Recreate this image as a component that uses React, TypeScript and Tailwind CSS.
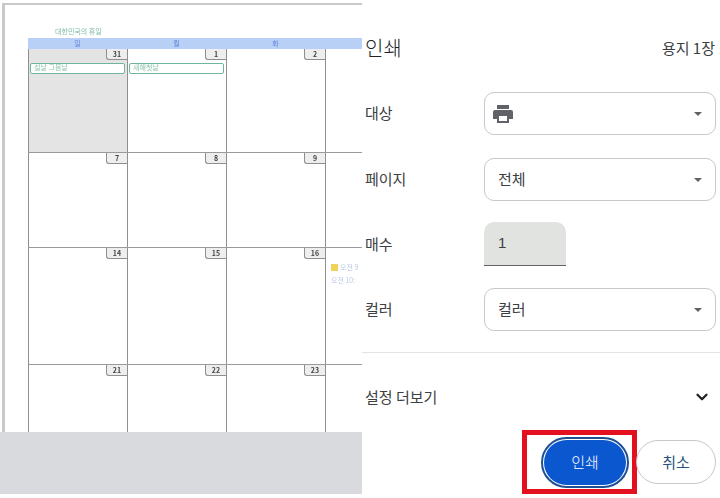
import { ChevronDown } from "lucide-react";

const font = "font-['Noto_Sans_CJK_KR','Noto_Sans',sans-serif]";

const rows = [
  { height: "h-[103px]", days: ["31", "1", "2"] },
  { height: "h-[95px]", days: ["7", "8", "9"] },
  { height: "h-[117px]", days: ["14", "15", "16"] },
  { height: "h-[68px]", days: ["21", "22", "23"] },
];

const events: Record<string, string> = {
  "31": "설날 그믐날",
  "1": "새해첫날",
};

const DayCell = ({ day }: { day: string }) => {
  return (
    <div className={`w-[99px] shrink-0 border-l border-[#8f8f8f] ${day === "31" ? "bg-[#e4e4e4]" : "bg-white"}`}>
      <div className="flex justify-end">
        <div className="h-[11px] w-[21px] rounded-bl-[3px] border-b border-l border-[#8f8f8f] bg-[#eeeeee] text-center text-[7px] leading-[10px] font-bold text-[#444444]">
          {day}
        </div>
      </div>
      {events[day] && (
        <div className="mt-[3px] ml-[1px] h-[11px] w-[95px] rounded-[2px] border-[1.5px] border-[#6fb59a] bg-white pl-[3px] text-[7px] leading-[6px] text-[#8cc4ac]">
          {events[day]}
        </div>
      )}
    </div>
  );
};

const Calendar = () => {
  return (
    <div className="w-[334px] overflow-hidden blur-[0.3px]">
      <div className="flex h-[11px] bg-[#b9d0f6] text-[7px] leading-[11px] text-[#5f86d8]">
        <div className="w-[99px] text-center">일</div>
        <div className="w-[99px] text-center">월</div>
        <div className="w-[99px] text-center">화</div>
      </div>
      {rows.map((row, i) => (
        <div key={i} className={`flex ${row.height} ${i > 0 ? "border-t border-[#9a9a9a]" : ""}`}>
          {row.days.map((d) => (
            <DayCell key={d} day={d} />
          ))}
          <div className="w-[37px] shrink-0 border-l border-[#8f8f8f] pt-[13px] pl-[5px]">
            {row.days[2] === "16" && (
              <div className="text-[7px] leading-[13px] whitespace-nowrap text-[#bcc6e6]">
                <div className="flex items-center gap-[2px]">
                  <span className="h-[7px] w-[7px] bg-[#f3d25a]" />
                  오전 9
                </div>
                <div>오전 10:</div>
              </div>
            )}
          </div>
        </div>
      ))}
    </div>
  );
};

const Select = ({ children }: { children: React.ReactNode }) => {
  return (
    <div className="flex h-[43px] w-[232px] items-center justify-between rounded-[10px] border border-[#c6c8cb] pr-[13px] pl-[13px] text-[15px] text-[#3c4043]">
      <div className="flex items-center">{children}</div>
      <span className="h-0 w-0 border-x-[4px] border-t-[4px] border-x-transparent border-t-[#5f6368]" />
    </div>
  );
};

const Row = ({ label, children, className }: { label: string; children: React.ReactNode; className?: string }) => {
  return (
    <div className={`flex items-center ${className ?? ""}`}>
      <div className="w-[122px] pl-[3px] text-[15px] text-[#3c4043]">{label}</div>
      {children}
    </div>
  );
};

export default function App() {
  return (
    <div className={`flex h-[498px] w-[720px] overflow-hidden bg-white ${font}`}>
      <div className="flex h-[494px] w-[362px] shrink-0 flex-col">
        <div className="h-[432px] pt-[3px] pl-[2px]">
          <div className="h-[429px] border-t-2 border-l-[3px] border-[#c9c9c9] pl-[23px]">
            <div className="h-[33px] pt-[20px] pl-[27px] text-[7px] leading-[12px] text-[#7fb9a6] blur-[0.3px]">대한민국의 휴일</div>
            <Calendar />
          </div>
        </div>
        <div className="flex-1 bg-[#d9dade]" />
      </div>

      <div className="flex w-[358px] flex-col">
        <div className="mt-[35px] flex h-[26px] items-center justify-between pr-[5px] pl-[3px]">
          <span className="text-[20px] font-light text-[#202124]">인쇄</span>
          <span className="text-[15px] text-[#3c4043]">용지 1장</span>
        </div>
        <Row label="대상" className="mt-[31px]">
          <Select>
            <svg width="22" height="20" viewBox="0 0 22 20" fill="#5f6368" className="-ml-[6px]">
              <path d="M5 1h12v4H5z" />
              <path d="M3 6h16a2 2 0 0 1 2 2v7h-4v4H5v-4H1V8a2 2 0 0 1 2-2z" />
              <path d="M7 12h8v5H7z" fill="#ffffff" />
            </svg>
          </Select>
        </Row>
        <Row label="페이지" className="mt-[23px]">
          <Select>전체</Select>
        </Row>
        <Row label="매수" className="mt-[21px]">
          <div className="flex h-[44px] w-[82px] items-center rounded-t-[10px] border-b border-[#5f6368] bg-[#e1e3e1] pl-[14px] font-['Liberation_Sans',sans-serif] text-[15px] text-[#3c4043]">
            1
          </div>
        </Row>
        <Row label="컬러" className="mt-[22px]">
          <Select>컬러</Select>
        </Row>
        <div className="mt-[21px] h-px bg-[#e3e3e3]" />
        <div className="mt-[32px] flex h-[24px] items-center justify-between pr-[9px] pl-[3px]">
          <span className="text-[15px] text-[#3c4043]">설정 더보기</span>
          <ChevronDown size={18} strokeWidth={3} className="text-[#202124]" />
        </div>
        <div className="mt-[21px] flex items-center pl-[160px]">
          <div className="flex h-[64px] w-[115px] items-center border-[5px] border-[#e3101f] bg-white pl-[14px]">
            <div className="flex h-[51px] w-[88px] shrink-0 items-center justify-center rounded-full border-[2px] border-[#1c4f94] bg-white">
              <div className="flex h-[45px] w-[82px] items-center justify-center rounded-full bg-[#0b57d0] text-[15px] font-light text-white">
                인쇄
              </div>
            </div>
          </div>
          <div className="-ml-[1px] flex h-[44px] w-[80px] items-center justify-center rounded-full border border-[#c6c8cb] text-[15px] text-[#27527f]">
            취소
          </div>
        </div>
      </div>
    </div>
  );
}
